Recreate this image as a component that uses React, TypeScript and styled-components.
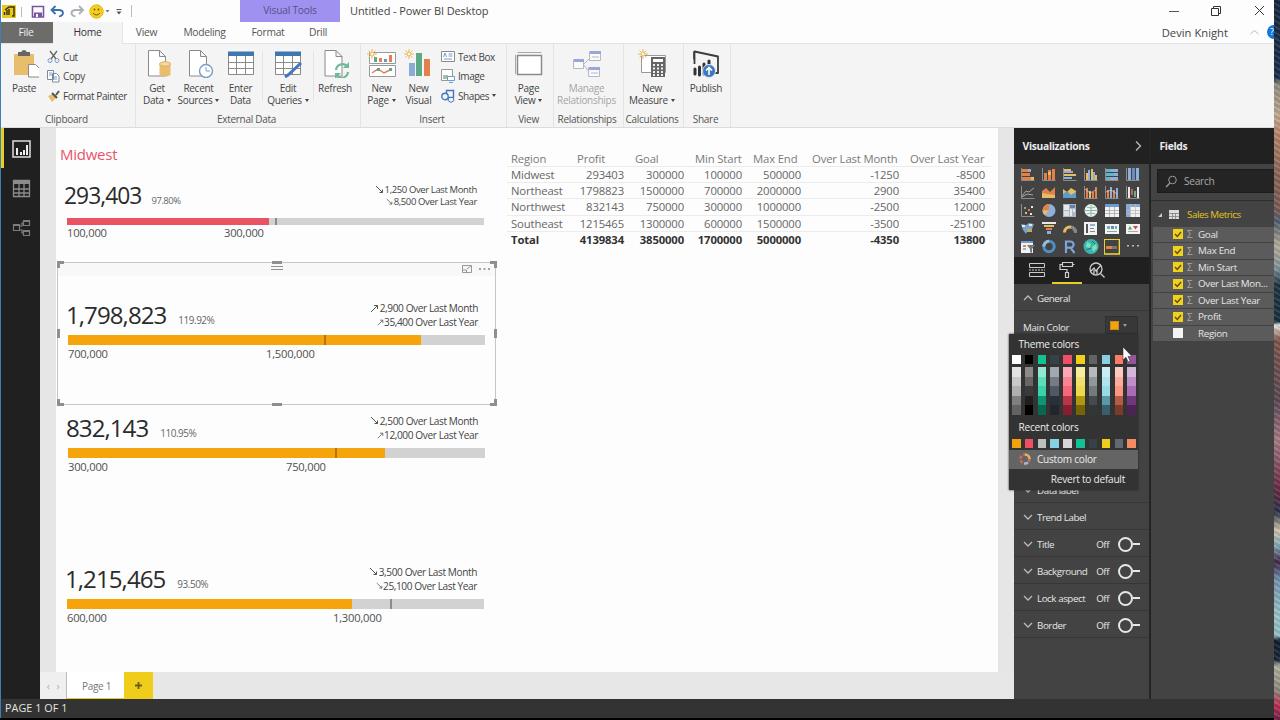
import React from "react";
import styled, { createGlobalStyle } from "styled-components";

const Global = createGlobalStyle`
  *{box-sizing:border-box}
  body{margin:0;overflow:hidden;background:#000}
  svg{display:block;flex:none}
`;

const Screen = styled.div`
  width:1280px;height:720px;display:flex;overflow:hidden;background:#000;
  font-family:"Open Sans","Noto Sans",sans-serif;font-size:10.5px;letter-spacing:-0.3px;color:#444;white-space:nowrap;cursor:default;
`;
const Edge = styled.div`width:1px;background:#3d7fb8;flex:none;height:718px;`;
const Window = styled.div`width:1273px;height:718px;display:flex;flex-direction:column;background:#fdfdfd;overflow:hidden;`;
const Wallpaper = styled.div`
  width:6px;height:720px;flex:none;
  background:
    repeating-linear-gradient(30deg,rgba(255,255,255,.1) 0 2px,rgba(20,20,40,.1) 2px 5px),
    linear-gradient(180deg,#16283f 0,#1b2f49 78px,#8f8c7e 84px,#c0ab92 115px,#b98468 135px,#8b6656 175px,#7b5a55 210px,#515f70 222px,#b9ae98 245px,#85959b 268px,#1d3440 285px,#18303c 322px,#f1efec 325px,#c9b5a9 330px,#80564a 340px,#5b4854 400px,#a87b84 440px,#6a2b41 488px,#28324a 512px,#d3c5aa 530px,#88b1bd 545px,#432547 562px,#7495b0 580px,#9cc4cb 615px,#93bec6 636px,#101c2c 640px,#172536 660px,#b5b3a0 666px,#8f897d 690px,#c02b55 706px,#6e2340 720px);
`;

/* Title bar */
const TitleBar = styled.div`height:22px;display:flex;align-items:center;flex:none;`;
const QuickBar = styled.div`width:239px;display:flex;align-items:center;`;
const ContextTab = styled.div`width:100px;height:22px;background:#9f91ef;color:#55508c;display:flex;align-items:center;justify-content:center;font-size:10.2px;letter-spacing:-.2px;padding-bottom:2px;`;
const WindowTitle = styled.div`flex:1;padding:0 0 1px 10px;font-size:11px;letter-spacing:-.1px;color:#444;`;
const WindowButtons = styled.div`display:flex;width:107px;height:22px;`;

/* Tab strip */
const TabStrip = styled.div`height:22px;display:flex;flex:none;border-bottom:1px solid #e2e2e2;`;
const Tab = styled.div<{ $w: number; $kind?: string }>`
  width:${p => p.$w}px;height:${p => (p.$kind === "on" ? 22 : 21)}px;display:flex;align-items:center;justify-content:center;color:#555;font-size:10.3px;flex:none;padding-bottom:${p => (p.$kind === "on" ? 3 : 2)}px;
  ${p => p.$kind === "file" && "background:#6c6c6a;color:#f0f0f0;padding-right:2px;"}
  ${p => p.$kind === "on" && "background:#f4f4f4;color:#333;border-right:1px solid #e4e4e4;"}
`;
const Account = styled.div`margin-left:auto;display:flex;align-items:center;font-size:11.2px;letter-spacing:.02px;height:20px;`;
const HelpDot = styled.div`width:7px;height:14px;border-radius:7px 0 0 7px;background:#1478d4;color:#fff;font-size:9px;line-height:14px;padding-left:3px;overflow:hidden;margin-left:7px;`;

/* Ribbon */
const Ribbon = styled.div`height:84px;display:flex;background:#f4f4f4;border-bottom:1px solid #dcdcdc;flex:none;`;
const Group = styled.div<{ $w: number }>`width:${p => p.$w}px;height:83px;border-right:1px solid #e3e3e3;display:flex;flex-direction:column;flex:none;`;
const GroupItems = styled.div`height:67px;display:flex;`;
const GroupName = styled.div`height:16px;line-height:17px;text-align:center;padding-right:3px;font-size:10px;letter-spacing:-.28px;color:#555;`;
const Big = styled.div<{ $w: number; $off?: boolean }>`
  width:${p => p.$w}px;padding-top:4px;display:flex;flex-direction:column;align-items:center;flex:none;text-align:center;
  font-size:10px;line-height:12.4px;letter-spacing:-.28px;color:${p => (p.$off ? "#a5a5a5" : "#444")};
  svg{margin-bottom:4px}
`;
const LabelLine = styled.div`display:flex;align-items:center;justify-content:center;gap:3px;height:12.4px;`;
const Caret = styled.i`border:2.5px solid transparent;border-top:3px solid #444;border-bottom:0;width:0;height:0;display:block;`;
const SmallStack = styled.div<{ $pad: number }>`padding:3px 0 0 ${p => p.$pad}px;display:flex;flex-direction:column;`;
const Small = styled.div`height:19.5px;display:flex;align-items:center;gap:3px;font-size:10px;letter-spacing:-.42px;`;
const Rule = styled.div`width:1px;height:50px;margin:7px 0 0;background:#e3e3e3;`;

/* Workspace */
const Body = styled.div`height:571px;display:flex;flex:none;`;
const Nav = styled.div`width:39px;background:#202020;display:flex;flex-direction:column;flex:none;`;
const NavItem = styled.div<{ $on?: boolean }>`height:39.5px;padding:2px 0 0 ${p => (p.$on ? 8 : 11)}px;display:flex;align-items:center;${p => p.$on && "border-left:3px solid #e8d01e;"}`;
const Center = styled.div`width:974px;display:flex;flex-direction:column;flex:none;background:#e6e6e6;`;
const Page = styled.div`width:942px;height:544px;margin-left:16px;background:#fdfdfd;display:flex;`;
const KpiColumn = styled.div`width:451px;padding:15px 0 0 1px;`;
const Region = styled.div`color:#e8546a;font-size:15px;letter-spacing:-.25px;line-height:22px;height:35px;padding-left:3px;`;

const Kpi = styled.div<{ $h: number; $x: number; $top: number; $sel?: boolean }>`
  width:439px;height:${p => p.$h}px;padding:${p => p.$top}px 0 0 ${p => p.$x}px;position:relative;
  box-shadow:${p => (p.$sel ? "inset 0 0 0 1px #c6c6c6" : "none")};
`;
const KpiHead = styled.div<{ $h: number }>`width:417px;height:${p => p.$h}px;display:flex;justify-content:space-between;`;
const KpiFigures = styled.div<{ $small?: boolean }>`display:flex;align-items:baseline;margin-left:${p => (p.$small ? -3 : -2)}px;font-size:${p => (p.$small ? 22.8 : 24.1)}px;line-height:${p => (p.$small ? 35 : 36)}px;letter-spacing:-.95px;color:#2b2b2b;`;
const Percent = styled.span<{ $small?: boolean }>`font-size:${p => (p.$small ? 9.5 : 10)}px;letter-spacing:-.5px;color:#666;margin-left:${p => (p.$small ? 10 : 12)}px;`;
const Trends = styled.div<{ $small?: boolean }>`
  padding:${p => (p.$small ? 6 : 5)}px 7px 0 0;display:flex;flex-direction:column;align-items:flex-end;
  font-size:${p => (p.$small ? 9.5 : 10.1)}px;letter-spacing:${p => (p.$small ? -0.38 : -0.4)}px;color:#444;line-height:${p => (p.$small ? 12.2 : 13.6)}px;
`;
const Trend = styled.div`display:flex;align-items:center;gap:.5px;`;
const Track = styled.div<{ $h: number }>`width:417px;height:${p => p.$h}px;background:#d2d2d2;position:relative;`;
const Fill = styled.div<{ $c: string }>`height:100%;background:${p => p.$c};`;
const Mark = styled.div<{ $dark?: boolean }>`position:absolute;top:0;bottom:0;width:2px;background:${p => (p.$dark ? "#b5750a" : "#8b8b8b")};`;
const Scale = styled.div<{ $goal: number; $lh: number }>`display:grid;grid-template-columns:${p => p.$goal}px auto;font-size:11.2px;line-height:${p => p.$lh}px;letter-spacing:-.22px;color:#505050;`;
const Handle = styled.i<{ $pos: string }>`position:absolute;${p => p.$pos}`;
const VisualHeader = styled.div`position:absolute;left:1px;right:1px;top:1px;height:13px;background:#f8f8f8;`;
const HeaderTools = styled.div`position:absolute;right:3px;top:-1px;`;
const Grip = styled.div`position:absolute;left:213px;top:3px;width:12px;height:4px;border:solid #8f8f8f;border-width:1px 0;`;

const Table = styled.div`margin-top:23px;width:484px;`;
const TRow = styled.div<{ $kind?: string }>`
  display:grid;grid-template-columns:66px 58px 60px 58px 59px 98px 85px;height:16.15px;line-height:15px;font-size:11.3px;letter-spacing:-.14px;
  color:${p => (p.$kind === "total" ? "#333" : p.$kind === "head" ? "#7a7a7a" : "#666")};font-weight:${p => (p.$kind === "total" ? 700 : 400)};
  border-bottom:${p => (p.$kind === "total" ? "0" : "1px solid #ececec")};
  span{padding:0 ${p => (p.$kind === "head" ? 0 : 7)}px 0 4px;text-align:${p => (p.$kind === "head" ? "left" : "right")}}
  span:first-child{text-align:left;padding-right:0}
  span:last-child{padding-right:${p => (p.$kind === "head" ? 0 : 6)}px}
`;

const PageTabs = styled.div`height:27px;display:flex;background:#e7e7e7;font-size:10px;`;
const PageArrows = styled.div`width:27px;background:#efefef;border-right:1px solid #bbb;display:flex;align-items:center;justify-content:space-evenly;color:#aaa;`;
const PageTab = styled.div`width:57px;background:#fff;border-bottom:1px solid #e9cf1c;display:flex;align-items:center;justify-content:center;color:#777;padding:1px 0 0 2px;`;
const AddPage = styled.div`width:29px;background:#f0cd1b;display:flex;align-items:center;justify-content:center;`;

/* Right panes */
const Pane = styled.div<{ $w: number }>`width:${p => p.$w}px;background:#434343;display:flex;flex-direction:column;flex:none;position:relative;color:#e6e6e6;font-size:9.8px;overflow:visible;`;
const PaneHead = styled.div`height:36px;background:#212121;display:flex;align-items:center;justify-content:space-between;padding:0 6px 0 8.5px;font-size:10.3px;font-weight:700;letter-spacing:-.3px;color:#ececec;flex:none;`;
const Split = styled.div`width:2px;background:#242424;flex:none;`;
const Gallery = styled.div`height:93px;display:grid;grid-template-columns:repeat(6,21px);grid-auto-rows:18px;padding:2px 0 0 3px;place-items:center;`;
const ModeTabs = styled.div`height:27px;background:#202020;display:flex;padding-left:8px;`;
const Mode = styled.div<{ $on?: boolean }>`width:30px;display:flex;align-items:center;justify-content:center;border-bottom:2px solid ${p => (p.$on ? "#e6cf1e" : "transparent")};`;
const Section = styled.div`height:27px;border-bottom:1px solid #373737;padding:2px 9px 0 9px;display:flex;align-items:center;gap:4px;letter-spacing:-.45px;flex:none;`;
const State = styled.span`margin-left:auto;margin-right:5px;`;
const Toggle = styled.i`width:22px;height:10px;display:flex;align-items:center;
  &::before{content:"";width:11px;height:11px;border:2px solid #e6e6e6;border-radius:50%}
  &::after{content:"";flex:1;height:1.5px;background:#e6e6e6}`;
const ColorField = styled.div`height:165px;padding:5px 11px 0 9px;display:flex;justify-content:space-between;align-items:flex-start;line-height:23px;letter-spacing:-.35px;font-size:9.8px;`;
const ColorButton = styled.div`width:33px;height:18px;background:#383838;border:1px solid #303030;display:flex;align-items:center;gap:4px;padding-left:4px;
  b{width:9px;height:9px;background:#f2a20d;border:1px solid #c98b1c}
  i{border-top-color:#999}`;
const Popup = styled.div`position:absolute;left:-5px;top:206px;width:129px;height:156px;background:#333;color:#ececec;box-shadow:0 0 2px #222;font-size:10.1px;letter-spacing:-.25px;`;
const PopupTitle = styled.div<{ $gap?: boolean }>`height:${p => (p.$gap ? 24 : 21)}px;line-height:${p => (p.$gap ? 25 : 20)}px;padding-left:9.5px;`;
const Swatches = styled.div`width:124px;margin-left:3px;display:flex;justify-content:space-between;`;
const Swatch = styled.div<{ $c: string }>`width:8.5px;height:9px;background:${p => p.$c};`;
const Shades = styled.div`display:flex;flex-direction:column;margin-top:3px;`;
const Shade = styled.div<{ $c: string }>`width:8.5px;height:9.6px;background:${p => p.$c};`;
const CustomRow = styled.div`height:19px;margin-top:2px;background:#646464;display:flex;align-items:center;gap:6px;padding-left:10px;`;
const Revert = styled.div`line-height:20px;text-align:right;padding-right:13px;`;
const Pointer = styled.div`position:absolute;left:113px;top:12px;`;

const SearchBox = styled.div`margin:5px 0 7px 6px;height:24px;background:#242424;border:1px solid #1b1b1b;border-right:0;display:flex;align-items:center;padding-left:7px;gap:6px;color:#aaa;font-size:10.2px;flex:none;`;
const TableName = styled.div`border-top:1px solid #2e2e2e;height:26.5px;display:flex;align-items:center;color:#e3c51d;padding:2px 0 0 6px;gap:6px;letter-spacing:-.45px;flex:none;
  span{margin-left:2px}`;
const Field = styled.div`height:16.5px;margin-left:2px;background:#5b5b5b;border-bottom:1px solid #424242;display:flex;align-items:center;padding-left:20px;letter-spacing:-.3px;flex:none;`;
const Check = styled.div<{ $on: boolean }>`width:10px;height:10px;background:${p => (p.$on ? "#f0d21d" : "#f4f4f4")};`;
const Sigma = styled.div`width:15px;padding-left:4px;color:#aaa;font-size:10px;flex:none;`;

const StatusBar = styled.div`height:19px;background:#333;color:#e4e4e4;font-size:10.8px;letter-spacing:.05px;line-height:18px;padding-left:4px;flex:none;`;

/* Icons */
type IcoProps = { w?: number; h?: number; vb?: string; children: React.ReactNode };
const Ico = ({ w = 30, h = 30, vb, children }: IcoProps) => (
  <svg width={w} height={h} viewBox={vb || `0 0 ${w} ${h}`} fill="none" stroke="#777" strokeWidth="1">{children}</svg>
);
const Doc = () => <path d="M3 2.500h11l6 6V28H3zM14 2.500v6h6" fill="#fff" stroke="#8a8a8a" />;
const Sun = ({ x, y }: { x: number; y: number }) => (
  <g transform={`translate(${x} ${y})`} stroke="#e8b860"><path d="M0-5V5M-5 0H5M-3.500-3.500l7 7M3.500-3.500l-7 7" /><circle r="2" fill="#fff6dc" /></g>
);
const Grid = () => (
  <g><path d="M2.500 4.500h25v22h-25z" fill="#fff" stroke="#8a8a8a" /><path d="M2 3.500h26V8H2z" fill="#3f76ae" stroke="none" /><path d="M3 14.500h25M3 20.500h25M10.500 8v18M19.500 8v18" stroke="#8a8a8a" /></g>
);
const Chev = ({ up, right, c = "#bbb" }: { up?: boolean; right?: boolean; c?: string }) => (
  <Ico w={10} h={10}><path d={right ? "M3 .5l4.500 4.500L3 9.500" : up ? "M1 7l4-4 4 4" : "M1 3l4 4 4-4"} stroke={c} strokeWidth="1.300" /></Ico>
);

const QuickIcons = () => (
  <Ico w={135} h={22}>
    <path d="M1 5h14v13H1z" fill="#e9c91c" stroke="none" />
    <path d="M3.500 12v3M6 10v5M8 9v6M4 10l4-3h5v9h-2" stroke="#3b3413" strokeWidth="1.500" />
    <path d="M20.500 7v10M130.500 5v12" stroke="#bbb" />
    <path d="M31.500 6.500h11v10.500h-11z" stroke="#7c52a3" strokeWidth="1.600" fill="#fff" /><path d="M33 12.500h8v4.500h-8z" fill="#7c52a3" stroke="none" /><path d="M35 14h2v3h-2z" fill="#fff" stroke="none" />
    <path d="M51 10h7.500q3.500.5 3.500 3t-4 3.500M54.500 6L50.500 10l4 4" stroke="#3b6fb0" strokeWidth="1.800" />
    <path d="M81.500 10H74q-3.500.5-3.500 3t4 3.500M78 6l4 4-4 4" stroke="#a9b0b8" strokeWidth="1.800" />
    <circle cx="95.500" cy="11.500" r="6.700" fill="#f5cf1d" stroke="#e2b80f" /><path d="M92 13q3.500 4 7 0" stroke="#6a5410" /><circle cx="93.500" cy="9.500" r=".9" fill="#6a5410" stroke="none" /><circle cx="97.500" cy="9.500" r=".9" fill="#6a5410" stroke="none" />
    <path d="M104.500 10h4l-2 2.500z" fill="#777" stroke="none" /><path d="M115.500 9.500h5" stroke="#555" /><path d="M115.500 11.500h5l-2.500 3z" fill="#555" stroke="none" />
  </Ico>
);

/* Visualization gallery */
const O = "#e2814a", B = "#8fb0d8", Y = "#e6bd62", W = "#e8e8e8", T = "#63b3cb";
const axis = <path d="M1.500 1v12.500H14.500" stroke="#8c8c8c" strokeWidth="1" />;
const R = (x: number, y: number, w: number, h: number, c: string) => <rect key={`${x}-${y}-${c}`} x={x} y={y} width={w} height={h} fill={c} stroke="none" />;
const gallery: React.ReactNode[] = [
  <>{axis}{R(2, 2, 6, 3, O)}{R(8, 2, 3, 3, B)}{R(2, 6, 8, 3, O)}{R(2, 10, 9, 3, O)}{R(11, 10, 3, 3, Y)}</>,
  <>{axis}{R(3, 6, 3, 7, O)}{R(7, 3, 3, 10, O)}{R(7, 5, 3, 3, Y)}{R(11, 2, 3, 11, O)}</>,
  <>{axis}{R(2, 2, 7, 2, Y)}{R(2, 4, 9, 2, B)}{R(2, 7, 12, 2, Y)}{R(2, 10, 8, 2, B)}</>,
  <>{axis}{R(3, 6, 2, 7, Y)}{R(5, 3, 2, 10, B)}{R(8, 2, 2, 11, Y)}{R(10, 5, 2, 8, B)}{R(12, 8, 2, 5, Y)}</>,
  <>{axis}{R(2, 2, 5, 3, T)}{R(7, 2, 7, 3, B)}{R(2, 6, 8, 3, T)}{R(10, 6, 4, 3, B)}{R(2, 10, 4, 3, T)}{R(6, 10, 8, 3, B)}</>,
  <>{axis}{R(3, 1, 3, 12, B)}{R(7, 1, 3, 12, "#6a8cc4")}{R(11, 1, 3, 12, B)}</>,
  <>{axis}<path d="M2 11l4-5 3 1 5-4M2 12l5-3 6 1" stroke="#a7a7a7" /></>,
  <><path d="M1 13V6l4-3 4 4 5-5v11z" fill={O} stroke="none" /><path d="M1 13V8l5 1 8 1v3z" fill={Y} stroke="none" /></>,
  <><path d="M1 13V4l4 3 4-4 5 3v7z" fill={Y} stroke="none" /><path d="M1 13V9l4-3 4 4 5-3v6z" fill="#5f9bc9" stroke="none" /></>,
  <>{axis}{R(3, 3, 2, 10, O)}{R(6, 6, 2, 7, Y)}{R(9, 7, 2, 6, O)}{R(12, 2, 2, 11, O)}<path d="M2 4l5 4 6-3" stroke={W} strokeWidth=".6" /></>,
  <>{axis}{R(3, 5, 2, 8, O)}{R(6, 2, 2, 11, B)}{R(9, 5, 2, 8, O)}{R(12, 3, 2, 10, B)}<path d="M2 7l5-2 6 4" stroke={W} strokeWidth=".6" /></>,
  <>{axis}{R(3, 2, 2, 11, W)}{R(6, 4, 2, 6, "#c26359")}{R(9, 6, 2, 6, "#79a78a")}{R(12, 2, 2, 11, W)}</>,
  <>{axis}{R(4, 4, 2, 2, T)}{R(8, 6, 2, 2, O)}{R(11, 3, 2, 2, W)}{R(5, 9, 2, 2, Y)}{R(10, 10, 2, 2, W)}</>,
  <><circle cx="8" cy="7.500" r="6.500" fill={B} stroke="none" /><path d="M8 7.500V1A6.500 6.500 0 0 0 1.500 7.500z" fill={O} stroke="none" /><path d="M8 7.500H1.500a6.500 6.500 0 0 0 2 4.500z" fill={Y} stroke="none" /></>,
  <>{R(1, 1, 13, 13, "#aeb7c4")}{R(2, 2, 5, 5, W)}{R(8, 2, 5, 3, "#6b7fa0")}{R(8, 6, 2, 7, W)}{R(11, 6, 2, 3, W)}{R(2, 8, 5, 5, "#dcdfe6")}</>,
  <><circle cx="8" cy="7.500" r="6.500" fill="#e9f3ef" stroke="none" /><path d="M2 7.500h12M8 1.500v12M3.500 4q4.500 2 9 0M3.500 11q4.500-2 9 0" stroke="#8fb8a8" /></>,
  <>{R(1, 1, 14, 13, "#f2f2f2")}{R(1, 1, 14, 3, "#6f9ad1")}<path d="M1 7.500h14M1 10.500h14M5.500 4v10M10.500 4v10" stroke="#a8a8a8" strokeWidth=".8" /></>,
  <>{R(1, 1, 14, 13, "#f2f2f2")}{R(1, 1, 14, 3, "#8aa8d6")}{R(1, 1, 4, 13, "#8aa8d6")}<path d="M1 7.500h14M1 10.500h14M5.500 1v13M10.500 1v13" stroke="#bcbcbc" strokeWidth=".8" /></>,
  <><path d="M1 3l5 1 3-2 5 1-2 5-4 1-2 4-3-4z" fill="#78a2ce" stroke="none" />{R(2, 4, 3, 2, W)}{R(7, 8, 5, 3, "#c9a65b")}{R(9, 3, 3, 2, W)}</>,
  <>{R(1, 1, 14, 2, W)}{R(3, 4, 10, 2, Y)}{R(5, 7, 6, 2, O)}{R(6, 10, 4, 3, B)}</>,
  <><path d="M2.500 11.500A5.500 5.500 0 0 1 13.500 11.500" stroke={Y} strokeWidth="3" /><path d="M9 6.300A5.500 5.500 0 0 1 13.500 11.500" stroke="#7a8796" strokeWidth="3" /></>,
  <>{R(1, 1, 13, 13, "#f2f2f2")}{R(3, 3, 2, 9, "#555")}{R(7, 3, 5, 2, B)}{R(7, 7, 4, 1, "#888")}{R(7, 10, 5, 1, "#888")}</>,
  <>{R(1, 3, 14, 10, "#f2f2f2")}{R(3, 5, 3, 3, T)}{R(7, 5, 3, 3, "#7a8796")}{R(11, 5, 2, 3, T)}{R(3, 10, 10, 1, "#8aa")}</>,
  <>{R(1, 3, 14, 10, "#f2f2f2")}<path d="M3 8.500l2-3.500 2 3.500z" fill="#4ba36e" stroke="none" /><path d="M8 5h5l-2.500 3.500z" fill="#c94b4b" stroke="none" />{R(3, 10, 10, 1, "#aaa")}</>,
  <>{R(1, 2, 12, 12, "#f2f2f2")}{R(1, 2, 12, 2, "#6f9ad1")}{R(3, 6, 3, 2, O)}{R(3, 9, 3, 2, B)}<path d="M7 6h8l-3 4v4l-2-1v-3z" fill="#777" stroke="none" /></>,
  <><circle cx="8" cy="7.500" r="5.200" stroke="#4f8fc4" strokeWidth="3" /><path d="M8 2.300A5.200 5.200 0 0 0 2.800 7.500" stroke="#98bdd9" strokeWidth="3" /></>,
  <path d="M4 14V2.500h4.500a3 3 0 0 1 0 6.200H4M8.500 8.700L12.500 14" stroke="#7ea3dc" strokeWidth="2.200" />,
  <><circle cx="8" cy="7.500" r="7.500" fill="#3cb7b0" stroke="none" /><path d="M4 3l4 2-1 4-4-1zM9 8l4-3 1 4-4 4z" fill="#7fe0b8" stroke="none" /><path d="M3 11l5-2M9 2l3 3" stroke="#1c6f86" /></>,
  <><rect x=".2" y=".2" width="15.200" height="14.800" stroke="#efd83a" strokeWidth="1.500" />{R(2, 7, 6, 3, O)}{R(8, 7, 5, 3, "#85746c")}</>,
  <>{R(2, 6, 2, 1.5, "#bbb")}{R(7, 6, 2, 1.5, "#bbb")}{R(12, 6, 2, 1.5, "#bbb")}</>,
];

const theme = ["#ffffff", "#000000", "#12c295", "#374047", "#ee4f64", "#f0cf1c", "#5f6463", "#86d0e2", "#f97d64", "#93559c"];
const shades = [
  ["#e4e4e4", "#c9c9c9", "#b0b0b0", "#808080", "#636363"],
  ["#8b8b8b", "#666666", "#3a3a3a", "#1f1f1f", "#000000"],
  ["#93e6cf", "#5ddcba", "#3ad3a9", "#0d9673", "#07684f"],
  ["#a2a7b2", "#767c87", "#525863", "#2a3038", "#22272e"],
  ["#fbaab4", "#f98594", "#f76679", "#b83648", "#871f2f"],
  ["#f7ec9d", "#f2e06d", "#eed94c", "#b0970e", "#766407"],
  ["#b6babb", "#929899", "#747a7b", "#454b4c", "#313637"],
  ["#c9edf4", "#b0e3ed", "#97dae8", "#5b98a8", "#35606c"],
  ["#ffc9bf", "#fdab9b", "#fc9680", "#b45b45", "#7a3b2b"],
  ["#d3b7d9", "#bd8fc6", "#a96bb2", "#6f3879", "#4d2255"],
];
const recent = ["#f2a20d", "#ee4f64", "#bcc0ba", "#86d0e2", "#d9d4d8", "#12c295", "#374047", "#f0cf1c", "#626974", "#f48b64"];

const Arrow = ({ up, s = 9 }: { up: boolean; s?: number }) => (
  <Ico w={s} h={s + 2} vb="0 0 9 11"><path d={up ? "M1 9L7.500 2.500M4 2.500h3.500V6" : "M1 1l6.500 6.500M4.500 7.500h3V4.500"} stroke="#555" /></Ico>
);

type KpiData = {
  h: number; x: number; top: number; head: number; bar: number; value: string; pct: string; fill: number; mark: number;
  color: string; min: string; goal: string; goalX: number; month: [boolean, string]; year: [boolean, string]; sel?: boolean; small?: boolean;
};
const kpis: KpiData[] = [
  { h: 84, x: 10, top: 0, head: 40, bar: 7, value: "293,403", pct: "97.80%", fill: 202, mark: 208, color: "#ea5362", min: "100,000", goal: "300,000", goalX: 157, month: [false, "1,250 Over Last Month"], year: [false, "8,500 Over Last Year"], small: true },
  { h: 143, x: 11, top: 35, head: 38, bar: 10, value: "1,798,823", pct: "119.92%", fill: 353, mark: 256, color: "#f5a50b", min: "700,000", goal: "1,500,000", goalX: 198, month: [true, "2,900 Over Last Month"], year: [true, "35,400 Over Last Year"], sel: true },
  { h: 150, x: 11, top: 5, head: 38, bar: 10, value: "832,143", pct: "110.95%", fill: 317, mark: 267, color: "#f5a50b", min: "300,000", goal: "750,000", goalX: 218, month: [false, "2,500 Over Last Month"], year: [true, "12,000 Over Last Year"] },
  { h: 110, x: 10, top: 6, head: 38, bar: 10, value: "1,215,465", pct: "93.50%", fill: 285, mark: 323, color: "#f5a50b", min: "600,000", goal: "1,300,000", goalX: 266, month: [false, "3,500 Over Last Month"], year: [false, "25,100 Over Last Year"] },
];
const handles = [
  "left:0;top:-1px;width:7px;height:7px;border:solid #8f8f8f;border-width:3px 0 0 3px",
  "right:-1px;top:-1px;width:7px;height:7px;border:solid #8f8f8f;border-width:3px 3px 0 0",
  "left:0;bottom:-1px;width:7px;height:7px;border:solid #8f8f8f;border-width:0 0 3px 3px",
  "right:-1px;bottom:-1px;width:7px;height:7px;border:solid #8f8f8f;border-width:0 3px 3px 0",
  "left:215px;top:-1px;width:10px;height:3px;background:#8f8f8f",
  "left:215px;bottom:-1px;width:10px;height:3px;background:#8f8f8f",
  "left:0;top:67px;width:3px;height:9px;background:#8f8f8f",
  "right:-1px;top:67px;width:3px;height:9px;background:#8f8f8f",
];

const KpiCard = ({ d }: { d: KpiData }) => (
  <Kpi $h={d.h} $x={d.x} $top={d.top} $sel={d.sel}>
    {d.sel && (
      <>
        <VisualHeader><Grip /><HeaderTools><Ico w={31} h={13}><path d="M1.500 3.500h9v7h-9zM1.500 8h4v2.500M6 7l4-3" stroke="#999" /><path d="M18 7h2M22.500 7h2M27 7h2" stroke="#888" strokeWidth="1.300" /></Ico></HeaderTools></VisualHeader>
        {handles.map(p => <Handle key={p} $pos={p} />)}
      </>
    )}
    <KpiHead $h={d.head}>
      <KpiFigures $small={d.small}>{d.value}<Percent $small={d.small}>{d.pct}</Percent></KpiFigures>
      <Trends $small={d.small}>
        <Trend><Arrow up={d.month[0]} />{d.month[1]}</Trend>
        <Trend><Arrow up={d.year[0]} s={7} />{d.year[1]}</Trend>
      </Trends>
    </KpiHead>
    <Track $h={d.bar}><Fill $c={d.color} style={{ width: d.fill }} /><Mark $dark={d.mark < d.fill} style={{ left: d.mark }} /></Track>
    <Scale $goal={d.goalX} $lh={d.small ? 16 : 18}><span>{d.min}</span><span>{d.goal}</span></Scale>
  </Kpi>
);

const rows: [string, string[]][] = [
  ["head", ["Region", "Profit", "Goal", "Min Start", "Max End", "Over Last Month", "Over Last Year"]],
  ["", ["Midwest", "293403", "300000", "100000", "500000", "-1250", "-8500"]],
  ["", ["Northeast", "1798823", "1500000", "700000", "2000000", "2900", "35400"]],
  ["", ["Northwest", "832143", "750000", "300000", "1000000", "-2500", "12000"]],
  ["", ["Southeast", "1215465", "1300000", "600000", "1500000", "-3500", "-25100"]],
  ["total", ["Total", "4139834", "3850000", "1700000", "5000000", "-4350", "13800"]],
];

const BigButton = ({ w, icon, a, b, caret, off }: { w: number; icon: React.ReactNode; a: string; b?: string; caret?: boolean; off?: boolean }) => (
  <Big $w={w} $off={off}>
    {icon}
    <LabelLine>{a}</LabelLine>
    {b && <LabelLine>{b}{caret && <Caret />}</LabelLine>}
  </Big>
);

const RibbonBar = () => (
  <Ribbon>
    <Group $w={135}>
      <GroupItems>
        <BigButton w={46} a="Paste" icon={<Ico><path d="M5 6h20v21H5z" fill="#e8bd6c" stroke="none" /><path d="M9 4h3q3-4 6 0h3v4H9z" fill="#666" stroke="none" /><path d="M19.500 16.500h7l4 4V29h-11z" fill="#fff" stroke="#8a8a8a" /></Ico>} />
        <SmallStack $pad={0}>
          <Small><Ico w={13} h={14}><path d="M3 1l6 8M10 1L4 9" stroke="#666" strokeWidth="1.300" /><circle cx="3" cy="10.500" r="2" stroke="#7d9ac0" /><circle cx="10" cy="10.500" r="2" stroke="#7d9ac0" /></Ico>Cut</Small>
          <Small><Ico w={13} h={14}><path d="M.5 1.500h6v9h-6zM5.500 4.500h4l2.500 2.500v6h-6.500z" fill="#fff" stroke="#7a8aa0" /><path d="M2 4h3M2 6h3M7 8h3M7 10h3" stroke="#7a9ac6" /></Ico>Copy</Small>
          <Small><Ico w={13} h={14}><path d="M1 7l5-2 3 4-4 4z" fill="#e8bd6c" stroke="none" /><path d="M5 4l5 5M9 6l3-4" stroke="#555" strokeWidth="2" /></Ico>Format Painter</Small>
        </SmallStack>
      </GroupItems>
      <GroupName>Clipboard</GroupName>
    </Group>
    <Group $w={225}>
      <GroupItems>
        <BigButton w={42} a="Get" b="Data" caret icon={<Ico><g transform="translate(3.500)"><Doc /></g><path d="M17.500 16v11q5.500 3 11 0V16z" fill="#e9bd6d" stroke="none" /><ellipse cx="23" cy="16" rx="5.500" ry="2.200" fill="#f5d9a0" stroke="#e0ae55" /></Ico>} />
        <BigButton w={41} a="Recent" b="Sources" caret icon={<Ico><g transform="translate(2.500)"><Doc /></g><circle cx="22" cy="23" r="6.500" fill="#fff" stroke="#7c9cc8" strokeWidth="1.400" /><path d="M22 19v4h4" stroke="#7c9cc8" /></Ico>} />
        <BigButton w={43} a="Enter" b="Data" icon={<Ico><Grid /></Ico>} />
        <Rule />
        <BigButton w={50} a="Edit" b="Queries" caret icon={<Ico><Grid /><path d="M28 15L15 27l-3 2" stroke="#4477bd" strokeWidth="3" /></Ico>} />
        <Rule />
        <BigButton w={42} a="Refresh" icon={<Ico><g transform="translate(2)"><Doc /></g><path d="M16 22a6.500 6.500 0 0 1 11-4M28 24a6.500 6.500 0 0 1-11 4" stroke="#6dbb96" strokeWidth="2.200" /><path d="M29 14v6h-6zM15 31v-6h6z" fill="#6dbb96" stroke="none" /></Ico>} />
      </GroupItems>
      <GroupName>External Data</GroupName>
    </Group>
    <Group $w={146}>
      <GroupItems>
        <BigButton w={41} a="New" b="Page" caret icon={<Ico><path d="M2.500 4.500h26v11h-26zM2.500 17.500h26v11h-26z" fill="#fff" stroke="#999" />{R(7, 9, 3, 5, "#5da987")}{R(12, 10, 3, 4, O)}{R(17, 11, 3, 3, "#6d93c8")}{R(22, 7, 3, 7, O)}<path d="M5 25l6-4 6 4 8-4" stroke={O} strokeWidth="1.500" />{R(10, 20, 3, 3, "#5da987")}{R(22, 20, 3, 3, "#5da987")}<Sun x={5} y={6} /></Ico>} />
        <BigButton w={33} a="New" b="Visual" icon={<Ico>{R(5, 15, 6, 13, "#88abd8")}{R(12, 5, 6, 23, "#5da987")}{R(20, 11, 6, 17, O)}<Sun x={5} y={6} /></Ico>} />
        <SmallStack $pad={6}>
          <Small><Ico w={14} h={14}><path d="M.5 1.500h13v10H.5z" fill="#fff" stroke="#8a8a8a" /><path d="M2.500 7l1.500-4 1.500 4M7.500 4h4M7.500 6h4M3 9h8" stroke="#7c9cc8" /></Ico>Text Box</Small>
          <Small><Ico w={14} h={14}><path d="M.5.5h11v11H.5z" fill="#fff" stroke="#999" />{R(2, 6, 5, 4, "#a8bfa8")}<path d="M6.500 7.500h7v4h-7zM8 13.500h4" fill="#fff" stroke="#6d9ad0" /></Ico>Image</Small>
          <Small><Ico w={14} h={14}><path d="M5.500 1.500h7v7h-7z" stroke="#4477bd" strokeWidth="1.400" /><circle cx="4" cy="7.500" r="3.200" fill="#f4f4f4" stroke="#4477bd" strokeWidth="1.400" /><path d="M8 8.500h4l1 3-3 2-3-2z" fill="#f4f4f4" stroke="#4477bd" /></Ico>Shapes <Caret /></Small>
        </SmallStack>
      </GroupItems>
      <GroupName>Insert</GroupName>
    </Group>
    <Group $w={47}>
      <GroupItems><BigButton w={43} a="Page" b="View" caret icon={<Ico><path d="M3.500 7.500h24v19h-24z" fill="#fff" stroke="#8a8a8a" strokeWidth="1.500" /><path d="M3.500 4.500h24M1.500 7v19" stroke="#aaa" /></Ico>} /></GroupItems>
      <GroupName>View</GroupName>
    </Group>
    <Group $w={70}>
      <GroupItems><BigButton w={65} off a="Manage" b="Relationships" icon={<Ico><g stroke="#b4b6cc"><path d="M1.500 11.500h10v9h-10zM17.500 3.500h11v9h-11zM16.500 19.500h11v9h-11z" fill="#fafafa" /><path d="M2 12.500h10M18 4.500h11M17 20.500h11" stroke="#9ba5d6" strokeWidth="3" /><path d="M12 16l6-6M12 17l5 7M20 9h7M19 25h7" /></g></Ico>} /></GroupItems>
      <GroupName>Relationships</GroupName>
    </Group>
    <Group $w={60}>
      <GroupItems><BigButton w={56} a="New" b="Measure" caret icon={<Ico><path d="M4.500 7.500h24v17h-24z" fill="#fff" stroke="#999" /><path d="M14 9h14v20H14z" fill="#666" stroke="none" />{R(16, 11, 10, 3, "#fff")}<path d="M16 17h10M16 20.500h10M16 24h10M16 27h10" stroke="#eee" strokeWidth="2" strokeDasharray="2 2" /><Sun x={6} y={6} /></Ico>} /></GroupItems>
      <GroupName>Calculations</GroupName>
    </Group>
    <Group $w={47}>
      <GroupItems><BigButton w={44} a="Publish" icon={<Ico><path d="M3.500 16V3.500L27 8.500V25h-4M3 3.500v8" stroke="#3d3d3d" strokeWidth="1.800" strokeLinejoin="round" /><path d="M4 21v5M8.500 19v8M13 16v10M18 13v8" stroke="#333" strokeWidth="3" strokeLinecap="round" /><circle cx="18" cy="23" r="6.500" fill="#3b78bf" stroke="#dfe9f5" /><path d="M18 27v-7M15 22.500l3-3 3 3" stroke="#fff" strokeWidth="1.600" /></Ico>} /></GroupItems>
      <GroupName>Share</GroupName>
    </Group>
  </Ribbon>
);

const fields = ["Goal", "Max End", "Min Start", "Over Last Mon...", "Over Last Year", "Profit", "Region"];

export default function App() {
  return (
    <Screen>
      <Global />
      <Edge />
      <Window>
        <TitleBar>
          <QuickBar><QuickIcons /></QuickBar>
          <ContextTab>Visual Tools</ContextTab>
          <WindowTitle>Untitled - Power BI Desktop</WindowTitle>
          <WindowButtons>
            <Ico w={107} h={22}><path d="M2 11.500h10" stroke="#555" /><path d="M44.500 8.500h7v7h-7zM46.500 8V6.500h7v7H52" stroke="#333" /><path d="M88 6l9 9M97 6l-9 9" stroke="#333" /></Ico>
          </WindowButtons>
        </TitleBar>
        <TabStrip>
          <Tab $w={52} $kind="file">File</Tab>
          <Tab $w={70} $kind="on">Home</Tab>
          <Tab $w={47}>View</Tab>
          <Tab $w={69}>Modeling</Tab>
          <Tab $w={58}>Format</Tab>
          <Tab $w={42}>Drill</Tab>
          <Account>Devin Knight<Ico w={32} h={10}><path d="M22.500 7l4-3.500 4 3.500" stroke="#bbb" /></Ico><HelpDot>?</HelpDot></Account>
        </TabStrip>
        <RibbonBar />
        <Body>
          <Nav>
            <NavItem $on><Ico w={19} h={19}><path d="M1 2h17v16H1z" stroke="#ddd" strokeWidth="1.500" /><path d="M5 16V9M9 16v-3M12 16v-5M15 16V6" stroke="#eee" strokeWidth="2" /></Ico></NavItem>
            <NavItem><Ico w={19} h={19}><path d="M1.500 1.500h16v16h-16zM1 10h17M1 14h17M7 5v13M12 5v13" stroke="#8c8c8c" strokeWidth="1.300" />{R(1, 1, 17, 4, "#8c8c8c")}</Ico></NavItem>
            <NavItem><Ico w={19} h={19}><path d="M1.500 6.500h6v6h-6zM11.500 2.500h6v5h-6zM11.500 12.500h6v5h-6zM8 8h2V5h2M8 12h2v3h2" stroke="#7c7c7c" strokeWidth="1.200" /><path d="M1 7h7M11 3h7M11 13h7" stroke="#7c7c7c" strokeWidth="2" /></Ico></NavItem>
          </Nav>
          <Center>
            <Page>
              <KpiColumn>
                <Region>Midwest</Region>
                {kpis.map(d => <KpiCard key={d.value} d={d} />)}
              </KpiColumn>
              <Table>
                {rows.map(([kind, cells]) => <TRow key={cells[0]} $kind={kind}>{cells.map((c, i) => <span key={i}>{c}</span>)}</TRow>)}
              </Table>
            </Page>
            <PageTabs>
              <PageArrows><span>‹</span><span>›</span></PageArrows>
              <PageTab>Page 1</PageTab>
              <AddPage><Ico w={9} h={9}><path d="M4.500 1v7M1 4.500h7" stroke="#6b5c1a" strokeWidth="1.800" /></Ico></AddPage>
            </PageTabs>
          </Center>
          <Pane $w={135}>
            <PaneHead>Visualizations<Chev right /></PaneHead>
            <Gallery>{gallery.map((g, i) => <Ico key={i} w={16} h={16} vb="0 0 16 16">{g}</Ico>)}</Gallery>
            <ModeTabs>
              <Mode><Ico w={16} h={16}><path d="M.5 1.500h15v4H.500zM.5 10.500h15v4H.500z" stroke="#ccc" /><path d="M0 8h16" stroke="#ccc" strokeDasharray="2 1" /></Ico></Mode>
              <Mode $on><Ico w={16} h={18}><path d="M3.500 1.500h10v4h-10zM13.500 3.500h2M3.500 3.500H1v5h7v3M6.500 11.500h3v5h-3z" stroke="#ccc" strokeWidth="1.200" /></Ico></Mode>
              <Mode><Ico w={18} h={18}><circle cx="8" cy="8" r="6" stroke="#ccc" strokeWidth="1.300" /><path d="M12.500 12.500l4 4M3 10l3-3 2 3 5-6M6 13V9M9 13V9" stroke="#ccc" strokeWidth="1.300" /></Ico></Mode>
            </ModeTabs>
            <Section><Chev up />General</Section>
            <ColorField>Main Color<ColorButton><b /><Caret /></ColorButton></ColorField>
            {["Data label", "Trend Label"].map(t => <Section key={t}><Chev />{t}</Section>)}
            {["Title", "Background", "Lock aspect", "Border"].map(t => <Section key={t}><Chev />{t}<State>Off</State><Toggle /></Section>)}
            <Popup>
              <PopupTitle>Theme colors</PopupTitle>
              <Swatches>{theme.map((c, i) => <div key={c}><Swatch $c={c} /><Shades>{shades[i].map(s => <Shade key={s} $c={s} />)}</Shades></div>)}</Swatches>
              <PopupTitle $gap>Recent colors</PopupTitle>
              <Swatches>{recent.map(c => <Swatch key={c} $c={c} />)}</Swatches>
              <CustomRow><Ico w={12} h={12}><circle cx="6" cy="6" r="4.500" stroke="#d9694d" strokeWidth="2.500" strokeDasharray="3 1.700" /><path d="M6 1.500a4.500 4.500 0 0 1 4.500 4.500" stroke="#e0b070" strokeWidth="2.500" /><path d="M9 9.500a4.500 4.500 0 0 1-4 .800" stroke="#9bb7e4" strokeWidth="2.500" /></Ico>Custom color</CustomRow>
              <Revert>Revert to default</Revert>
              <Pointer><Ico w={12} h={18}><path d="M1 1v13l3-2.800 2.200 4.800 2-1-2.200-4.600H10z" fill="#fff" stroke="#333" strokeWidth=".6" /></Ico></Pointer>
            </Popup>
          </Pane>
          <Split />
          <Pane $w={123}>
            <PaneHead>Fields<Ico w={6} h={10}><path d="M7 1l4 4-4 4" transform="translate(-1)" stroke="#bbb" /></Ico></PaneHead>
            <SearchBox><Ico w={13} h={13}><circle cx="7.500" cy="5" r="3.800" stroke="#999" /><path d="M5 8l-4 4" stroke="#999" strokeWidth="1.400" /></Ico>Search</SearchBox>
            <TableName>
              <Ico w={6} h={6}><path d="M5 1v4H1z" fill="#ccc" stroke="none" /></Ico>
              <Ico w={10} h={10}>{R(0, 0, 10, 9, "#ddd")}<path d="M0 3.500h10M0 6.500h10M3.500 3v6M6.500 3v6" stroke="#777" strokeWidth=".7" /></Ico>
              <span>Sales Metrics</span>
            </TableName>
            {fields.map(f => (
              <Field key={f}>
                <Check $on={f !== "Region"}>{f !== "Region" && <Ico w={10} h={10}><path d="M2 5l2.300 2.500L8 3" stroke="#5b4d10" strokeWidth="1.400" /></Ico>}</Check>
                <Sigma>{f !== "Region" && "Σ"}</Sigma>{f}
              </Field>
            ))}
          </Pane>
        </Body>
        <StatusBar>PAGE 1 OF 1</StatusBar>
      </Window>
      <Wallpaper />
    </Screen>
  );
}
